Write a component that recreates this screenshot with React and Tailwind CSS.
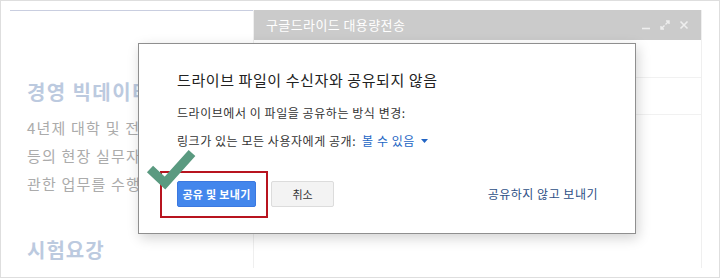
export default function App() {
  return (
    <div className="relative w-[720px] h-[278px] bg-white border border-[#dedede] overflow-hidden font-['Noto_Sans_CJK_KR','Noto_Sans',sans-serif]">
      <div className="flex pt-[9px] pl-[9px] h-full">
        {/* left column */}
        <div className="w-[243px] h-full border-t border-[#c9cee0] pl-[17px] overflow-hidden">
          <div className="mt-[67px] text-[20px] leading-[28px] font-bold tracking-[1.4px] text-[#bccadf] whitespace-nowrap">경영 빅데이터 분석사</div>
          <div className="mt-[8px] text-[15px] leading-[28px] tracking-[1.2px] text-[#ababab] whitespace-nowrap">
            <div>4년제 대학 및 전문대학 졸업자</div>
            <div>등의 현장 실무자로서 데이터에</div>
            <div>관한 업무를 수행하는 사람</div>
          </div>
          <div className="mt-[38px] text-[20px] leading-[28px] font-bold tracking-[1px] text-[#bccadf] whitespace-nowrap">시험요강</div>
        </div>
        {/* right column */}
        <div className="w-[449px] h-[258px] flex flex-col border-l border-r border-[#efefef]">
          <div className="h-[30px] bg-[#cbcbcb] flex items-center pl-[12px] pr-[12px]">
            <span className="text-[13px] tracking-[0.4px] text-white">구글드라이드 대용량전송</span>
            <div className="ml-auto flex items-center gap-[9px]">
              <svg width="10" height="10" viewBox="0 0 10 10"><path d="M1 8.5H9" stroke="#eeeeee" strokeWidth="1.6" /></svg>
              <svg width="10" height="10" viewBox="0 0 10 10" fill="none" stroke="#eeeeee" strokeWidth="1.4"><path d="M5.5 4.5L9 1M6 1H9V4M4.5 5.5L1 9M1 6V9H4" /></svg>
              <svg width="10" height="10" viewBox="0 0 10 10" fill="none" stroke="#eeeeee" strokeWidth="1.6"><path d="M1.5 1.5L8.5 8.5M8.5 1.5L1.5 8.5" /></svg>
            </div>
          </div>
          <div className="h-[38px] border-b border-[#f1f1f1]" />
          <div className="h-[37px] border-b border-[#f1f1f1]" />
          <div className="flex-1" />
        </div>
      </div>

      {/* dialog */}
      <div className="absolute left-[137px] top-[42px] w-[498px] h-[191px] bg-white border border-[#8f8f8f] shadow-[2px_4px_12px_rgba(0,0,0,0.18)] flex flex-col pl-[38px] pr-[37px]">
        <div className="mt-[26px] text-[15px] leading-[20px] tracking-[0.6px] text-[#222222] whitespace-nowrap">드라이브 파일이 수신자와 공유되지 않음</div>
        <div className="mt-[14px] text-[12px] leading-[18px] tracking-[0.55px] text-[#333333] whitespace-nowrap">드라이브에서 이 파일을 공유하는 방식 변경:</div>
        <div className="mt-[10px] text-[12px] leading-[18px] tracking-[0.55px] text-[#333333] whitespace-nowrap flex items-center">
          <span>링크가 있는 모든 사용자에게 공개:</span>
          <span className="ml-[6px] text-[#2265c4]">볼 수 있음</span>
          <svg className="ml-[6px]" width="7" height="4" viewBox="0 0 7 4"><path d="M0 0H7L3.5 4Z" fill="#2265c4" /></svg>
        </div>
        <div className="mt-[31px] flex items-center">
          <button className="w-[79px] h-[26px] rounded-[2px] bg-[#4386ec] border border-[#3b78e0] text-white text-[11px] font-bold tracking-[0.3px]">공유 및 보내기</button>
          <button className="ml-[15px] w-[63px] h-[26px] rounded-[2px] bg-[#f3f3f3] border border-[#dcdcdc] text-[#333333] text-[11px]">취소</button>
          <span className="ml-auto text-[12px] tracking-[0.5px] text-[#2d4f86]">공유하지 않고 보내기</span>
        </div>
      </div>

      {/* red highlight box */}
      <div className="absolute left-[159px] top-[170px] w-[108px] h-[47px] border-2 border-[#b8141f]" />

      {/* check mark */}
      <svg className="absolute left-0 top-0" width="720" height="278" viewBox="0 0 720 278" fill="none">
        <path d="M149 168L164 182L191 152" stroke="#5a9a80" strokeWidth="9" strokeLinejoin="miter" />
      </svg>
    </div>
  );
}
